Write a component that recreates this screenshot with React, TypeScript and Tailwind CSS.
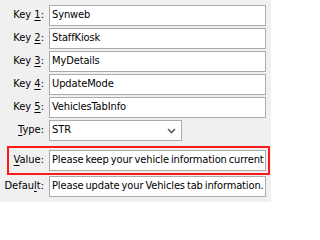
import React from "react";

const font = { fontFamily: '"DejaVu Sans Condensed", Tahoma, "DejaVu Sans", sans-serif' };

function Label({ pre, u, post }: { pre: string; u: string; post: string }) {
  return (
    <span className="whitespace-pre">
      {pre}
      <span className="underline underline-offset-[2px]">{u}</span>
      {post}
    </span>
  );
}

function Field({ value, w = "w-[217px]" }: { value: string; w?: string }) {
  return (
    <div className={`${w} h-[21px] border border-[#ababab] bg-white pl-[2px] flex items-center overflow-hidden whitespace-nowrap tracking-[-0.12px] [word-spacing:-1px]`}>
      {value}
    </div>
  );
}

export default function App() {
  const keys = ["Synweb", "StaffKiosk", "MyDetails", "UpdateMode", "VehiclesTabInfo"];
  return (
    <div
      className="w-[271px] h-[202px] bg-[#f0f0f0] text-[11px] text-black pt-[5px] overflow-hidden"
      style={font}
    >
      <div className="flex flex-col gap-[2px]">
        {keys.map((k, i) => (
          <div key={k} className="flex items-center h-[21px]">
            <div className="w-[49px] text-right pr-[5px]">
              <Label pre="Key " u={String(i + 1)} post=":" />
            </div>
            <Field value={k} />
          </div>
        ))}
        <div className="flex items-center h-[21px]">
          <div className="w-[49px] text-right pr-[5px]">
            <Label pre="" u="T" post="ype:" />
          </div>
          <div className="w-[133px] h-[21px] border border-[#ababab] bg-white pl-[2px] flex items-center justify-between">
            <span>STR</span>
            <svg width="9" height="6" viewBox="0 0 9 6" className="mr-[5px]">
              <path d="M1 1 L4.5 4.5 L8 1" stroke="#606060" strokeWidth="1.6" fill="none" />
            </svg>
          </div>
        </div>
      </div>
      <div className="ml-[7px] mt-[5px] w-[263px] h-[29px] border-2 border-[#ff1a1a] flex items-center">
        <div className="w-[40px] text-right pr-[5px]">
          <Label pre="" u="V" post="alue:" />
        </div>
        <Field value="Please keep your vehicle information current" />
      </div>
      <div className="flex items-center h-[21px] mt-[1px]">
        <div className="w-[49px] text-right pr-[5px]">
          <Label pre="Defau" u="l" post="t:" />
        </div>
        <Field value="Please update your Vehicles tab information." />
      </div>
    </div>
  );
}
